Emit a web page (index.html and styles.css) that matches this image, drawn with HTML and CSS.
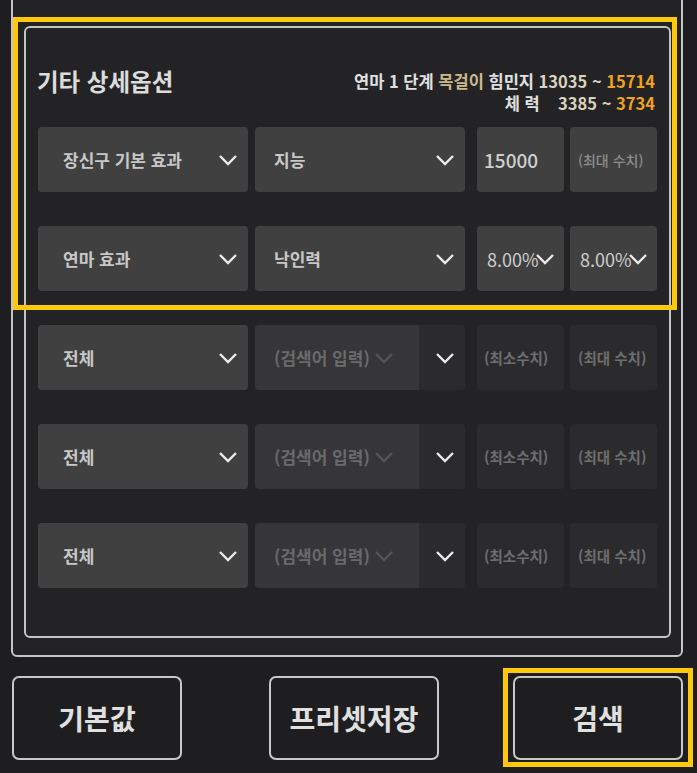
FILE: index.html
```html
<!DOCTYPE html>
<html lang="ko">
<head>
    <meta charset="UTF-8">
    <meta name="viewport" content="width=device-width, initial-scale=1.0">
    <title>기타 상세옵션</title>
    <link rel="stylesheet" href="styles.css">
</head>
<body>
<div class="page">

    <div class="panel">
        <div class="opt-box">
            <div class="opt-head">
                <div class="opt-title">기타 상세옵션</div>
                <div class="opt-info">
                    <div>연마 1 단계 <span class="tan">목걸이</span> 힘민지 <span class="cream">13035 ~</span> <span class="orange">15714</span></div>
                    <div>체 력&nbsp;&nbsp;&nbsp; <span class="cream">3385 ~</span> <span class="orange">3734</span></div>
                </div>
            </div>

            <div class="rows">
                <div class="row">
                    <div class="field key"><span>장신구 기본 효과</span><svg class="chev" viewBox="0 0 20 12"><path d="M2 2l8 8 8-8"/></svg></div>
                    <div class="field value"><span>지능</span><svg class="chev" viewBox="0 0 20 12"><path d="M2 2l8 8 8-8"/></svg></div>
                    <div class="field num min big">15000</div>
                    <div class="field num ph">(최대 수치)</div>
                </div>

                <div class="row">
                    <div class="field key"><span>연마 효과</span><svg class="chev" viewBox="0 0 20 12"><path d="M2 2l8 8 8-8"/></svg></div>
                    <div class="field value"><span>낙인력</span><svg class="chev" viewBox="0 0 20 12"><path d="M2 2l8 8 8-8"/></svg></div>
                    <div class="field num min pct"><span>8.00%</span><svg class="chev" viewBox="0 0 20 12"><path d="M2 2l8 8 8-8"/></svg></div>
                    <div class="field num pct"><span>8.00%</span><svg class="chev" viewBox="0 0 20 12"><path d="M2 2l8 8 8-8"/></svg></div>
                </div>

                <div class="row">
                    <div class="field key"><span>전체</span><svg class="chev" viewBox="0 0 20 12"><path d="M2 2l8 8 8-8"/></svg></div>
                    <div class="field value search">
                        <div class="search-input"><span>(검색어 입력)</span><svg class="chev dim" viewBox="0 0 20 12"><path d="M2 2l8 8 8-8"/></svg></div>
                        <svg class="chev" viewBox="0 0 20 12"><path d="M2 2l8 8 8-8"/></svg>
                    </div>
                    <div class="field num min empty">(최소수치)</div>
                    <div class="field num empty">(최대 수치)</div>
                </div>

                <div class="row">
                    <div class="field key"><span>전체</span><svg class="chev" viewBox="0 0 20 12"><path d="M2 2l8 8 8-8"/></svg></div>
                    <div class="field value search">
                        <div class="search-input"><span>(검색어 입력)</span><svg class="chev dim" viewBox="0 0 20 12"><path d="M2 2l8 8 8-8"/></svg></div>
                        <svg class="chev" viewBox="0 0 20 12"><path d="M2 2l8 8 8-8"/></svg>
                    </div>
                    <div class="field num min empty">(최소수치)</div>
                    <div class="field num empty">(최대 수치)</div>
                </div>

                <div class="row">
                    <div class="field key"><span>전체</span><svg class="chev" viewBox="0 0 20 12"><path d="M2 2l8 8 8-8"/></svg></div>
                    <div class="field value search">
                        <div class="search-input"><span>(검색어 입력)</span><svg class="chev dim" viewBox="0 0 20 12"><path d="M2 2l8 8 8-8"/></svg></div>
                        <svg class="chev" viewBox="0 0 20 12"><path d="M2 2l8 8 8-8"/></svg>
                    </div>
                    <div class="field num min empty">(최소수치)</div>
                    <div class="field num empty">(최대 수치)</div>
                </div>
            </div>
        </div>
    </div>

    <div class="actions">
        <button type="button" class="btn">기본값</button>
        <button type="button" class="btn btn-save">프리셋저장</button>
        <button type="button" class="btn btn-search">검색</button>
    </div>

</div>
</body>
</html>
```

FILE: styles.css
```css
body {
    margin: 0;
    background-color: #1e1e20;
    font-family: "Noto Sans CJK KR", "Noto Sans", sans-serif;
    color: #d8d8d8;
}
.page {
    width: 697px;
    height: 773px;
    overflow: hidden;
}

/* panels */
.panel {
    position: relative;
    margin: -10px 14px 0 11px;
    padding: 34px 10px 17px 11px;
    border: 2px solid #c4c4c4;
    border-radius: 6px;
    background-color: #232325;
}
.panel::after {
    content: "";
    position: absolute;
    left: 0;
    top: 25px;
    width: 664px;
    height: 293px;
    box-sizing: border-box;
    border: 5px solid #ffc80a;
    pointer-events: none;
}
.opt-box {
    padding: 0 12px 48px 12px;
    border: 2px solid #c4c4c4;
    border-radius: 6px;
}

/* header */
.opt-head {
    display: flex;
    justify-content: space-between;
    align-items: flex-start;
    height: 99px;
    padding-top: 41px;
    box-sizing: border-box;
}
.opt-title {
    margin-left: -1px;
    font-size: 23.5px;
    font-weight: 700;
    line-height: 24px;
    color: #dcdcdc;
}
.opt-info {
    margin: 1px 2px 0 0;
    text-align: right;
    font-size: 16.5px;
    font-weight: 700;
    line-height: 22px;
    color: #e0e0e0;
}
.tan {
    color: #cbb98c;
}
.cream {
    color: #dcd3bf;
}
.orange {
    color: #f2a21c;
}

/* option rows */
.rows {
    display: flex;
    flex-direction: column;
    gap: 34px;
}
.row {
    display: flex;
    gap: 6px;
}
.field {
    display: flex;
    align-items: center;
    justify-content: space-between;
    height: 65px;
    box-sizing: border-box;
    border-radius: 4px;
    background-color: #404040;
    color: #c8c8c8;
    font-size: 17px;
    font-weight: 700;
    white-space: nowrap;
}
.key {
    width: 210px;
    padding: 0 10px 0 25px;
}
.value {
    width: 210px;
    margin-left: 1px;
    padding: 0 10px 0 19px;
}
.num {
    width: 87px;
    padding: 0 0 0 8px;
    justify-content: flex-start;
}
.min {
    margin-left: 6px;
    padding-left: 7px;
}
.big {
    font-size: 19px;
    font-weight: 500;
    color: #cfcfcf;
}
.ph {
    font-size: 14px;
    font-weight: 500;
    color: #8c8c8c;
}
.pct {
    padding-left: 10px;
    font-size: 18px;
    font-weight: 400;
    color: #cdcdcd;
}
.pct .chev {
    margin-left: -4px;
}
.empty {
    background-color: #2b2b2d;
    font-size: 14.5px;
    color: #6e6e6e;
}
.search {
    padding-left: 0;
    background-color: #2b2b2d;
}
.search-input {
    display: flex;
    align-items: center;
    gap: 4px;
    width: 164px;
    height: 100%;
    padding-left: 19px;
    box-sizing: border-box;
    border-radius: 4px 0 0 4px;
    background-color: #363638;
    color: #6a6a6a;
}

.chev {
    width: 20px;
    height: 12px;
    flex-shrink: 0;
    fill: none;
    stroke: #ebebeb;
    stroke-width: 2.4;
}
.chev.dim {
    stroke: #555557;
}

/* bottom buttons */
.actions {
    display: flex;
    justify-content: space-between;
    margin: 19px 14px 0 12px;
}
.btn {
    position: relative;
    width: 170px;
    height: 84px;
    box-sizing: border-box;
    border: 2px solid #c8c8c8;
    border-radius: 7px;
    background-color: #1e1e20;
    color: #e0e0e0;
    font-family: "Noto Sans CJK KR", "Noto Sans", sans-serif;
    font-size: 28px;
    font-weight: 700;
    cursor: pointer;
}
.btn-save {
    margin-left: 13px;
}
.btn-search::after {
    content: "";
    position: absolute;
    left: -12px;
    top: -10px;
    right: -12px;
    bottom: -9px;
    border: 5px solid #ffc80a;
    pointer-events: none;
}
```
